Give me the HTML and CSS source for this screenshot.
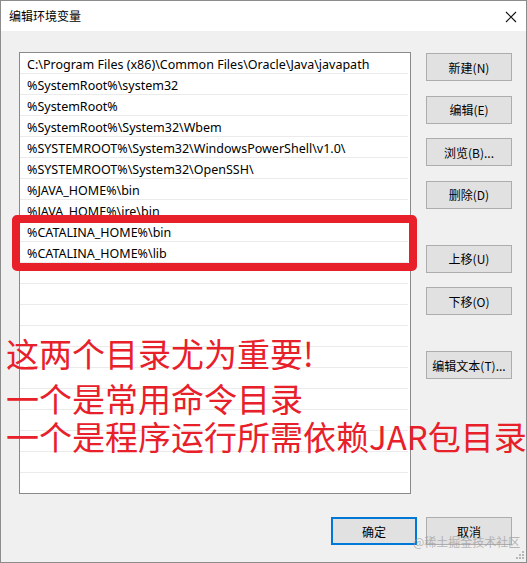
FILE: index.html
```html
<!DOCTYPE html>
<html lang="zh-CN">
<head>
<meta charset="utf-8">
<title>编辑环境变量</title>
<link rel="stylesheet" href="styles.css">
</head>
<body>
<div class="window">
  <div class="titlebar">
    <span class="title">编辑环境变量</span>
    <svg class="close" width="12" height="12" viewBox="0 0 12 12"><path d="M1 1 L11 11 M11 1 L1 11" stroke="#111" stroke-width="1.1" fill="none"/></svg>
  </div>
  <div class="content">
    <div class="main">
      <div class="list">
        <div class="item">C:\Program Files (x86)\Common Files\Oracle\Java\javapath</div>
        <div class="item">%SystemRoot%\system32</div>
        <div class="item">%SystemRoot%</div>
        <div class="item">%SystemRoot%\System32\Wbem</div>
        <div class="item">%SYSTEMROOT%\System32\WindowsPowerShell\v1.0\</div>
        <div class="item">%SYSTEMROOT%\System32\OpenSSH\</div>
        <div class="item">%JAVA_HOME%\bin</div>
        <div class="item">%JAVA_HOME%\jre\bin</div>
        <div class="item">%CATALINA_HOME%\bin</div>
        <div class="item">%CATALINA_HOME%\lib</div>
      </div>
      <div class="side">
        <div class="group">
          <button class="btn">新建(N)</button>
          <button class="btn">编辑(E)</button>
          <button class="btn">浏览(B)...</button>
          <button class="btn">删除(D)</button>
        </div>
        <div class="group">
          <button class="btn">上移(U)</button>
          <button class="btn">下移(O)</button>
        </div>
        <div class="group">
          <button class="btn">编辑文本(T)...</button>
        </div>
      </div>
    </div>
    <div class="footer">
      <button class="btn primary">确定</button>
      <button class="btn">取消</button>
    </div>
  </div>
  <div class="highlight"></div>
  <div class="note">
    <div class="note-line first">这两个目录尤为重要!</div>
    <div class="note-line">一个是常用命令目录</div>
    <div class="note-line">一个是程序运行所需依赖JAR包目录</div>
  </div>
  <div class="watermark">@稀土掘金技术社区</div>
  <svg class="grip" width="8" height="8" viewBox="0 0 8 8">
    <rect x="6" y="0" width="2" height="2" fill="#b8b8b8"/>
    <rect x="3" y="3" width="2" height="2" fill="#b8b8b8"/>
    <rect x="6" y="3" width="2" height="2" fill="#b8b8b8"/>
    <rect x="0" y="6" width="2" height="2" fill="#b8b8b8"/>
    <rect x="3" y="6" width="2" height="2" fill="#b8b8b8"/>
    <rect x="6" y="6" width="2" height="2" fill="#b8b8b8"/>
  </svg>
</div>
</body>
</html>
```

FILE: styles.css
```css
* { box-sizing: border-box; }
html, body { margin: 0; padding: 0; }
body {
  width: 527px;
  height: 563px;
  overflow: hidden;
  font-family: "Noto Sans", "Noto Sans CJK SC", sans-serif;
  font-size: 12px;
  color: #000;
}
.window {
  position: relative;
  width: 527px;
  height: 563px;
  border: 1px solid #8c8c8c;
  background: #f0f0f0;
  display: flex;
  flex-direction: column;
}
.titlebar {
  height: 30px;
  background: #fff;
  display: flex;
  align-items: center;
  justify-content: space-between;
  padding: 0 9px 0 8px;
}
.title {
  font-family: "Noto Sans CJK SC", sans-serif;
  font-size: 12px;
  line-height: 16px;
}
.close { display: block; margin-top: 1px; }
.content {
  flex: 1;
  padding: 21px 14px 0 18px;
  display: flex;
  flex-direction: column;
}
.main {
  display: flex;
  gap: 15px;
}
.list {
  width: 392px;
  height: 442px;
  border: 1px solid #8a8a8a;
  background-color: #fff;
  background-image: repeating-linear-gradient(to bottom, transparent 0, transparent 20px, #ebebeb 20px, #ebebeb 21px);
  background-size: 388px 100%;
  background-repeat: no-repeat;
}
.item {
  height: 21px;
  line-height: 23px;
  padding-left: 7px;
  font-size: 12.5px;
  white-space: nowrap;
}
.side {
  display: flex;
  flex-direction: column;
  gap: 36px;
  padding-top: 1px;
}
.group {
  display: flex;
  flex-direction: column;
  gap: 14.5px;
}
.btn {
  width: 86px;
  height: 28px;
  background: #e1e1e1;
  border: 1px solid #adadad;
  font-family: "Noto Sans CJK SC", sans-serif;
  font-size: 12px;
  color: #000;
  padding: 0;
  margin: 0;
}
.btn.primary {
  border: 2px solid #0078d7;
}
.footer {
  margin-top: 23px;
  display: flex;
  justify-content: flex-end;
  gap: 9px;
}
.highlight {
  position: absolute;
  left: 11px;
  top: 214px;
  width: 405px;
  height: 56px;
  border: 8px solid #e8202a;
  border-radius: 5px;
}
.note {
  position: absolute;
  left: 5px;
  top: 333px;
  font-family: "Noto Sans CJK SC", sans-serif;
  font-size: 33px;
  color: #e8202a;
  white-space: nowrap;
}
.note-line { line-height: 38px; }
.note-line.first { margin-bottom: 7px; }
.watermark {
  position: absolute;
  left: 412px;
  top: 532px;
  font-family: "Noto Sans CJK SC", sans-serif;
  font-size: 12px;
  color: rgba(160, 160, 160, 0.75);
  white-space: nowrap;
}
.grip {
  position: absolute;
  right: 2px;
  bottom: 3px;
}
```
